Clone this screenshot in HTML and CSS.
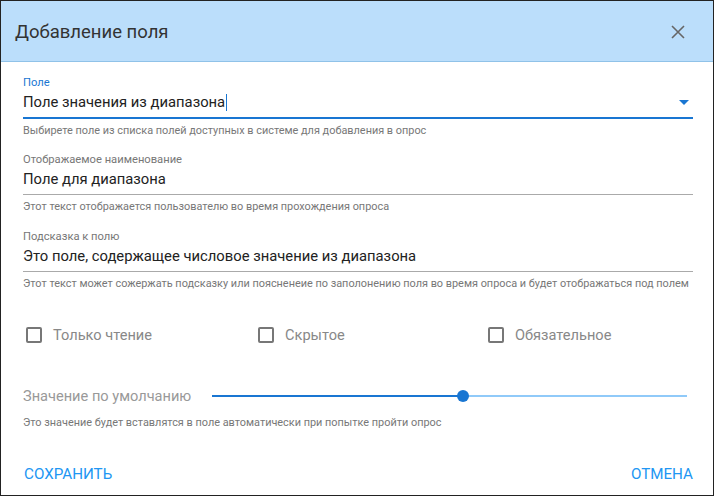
FILE: index.html
```html
<!DOCTYPE html>
<html lang="ru">
<head>
<meta charset="utf-8">
<link rel="stylesheet" href="styles.css">
</head>
<body>
<div class="dialog">
  <div class="header">
    <div class="title">Добавление поля</div>
    <svg class="close" width="14" height="14" viewBox="0 0 14 14"><path d="M1 1L13 13M13 1L1 13" stroke="#666" stroke-width="1.6" fill="none"/></svg>
  </div>
  <div class="content">
    <div class="field focused">
      <div class="label">Поле</div>
      <div class="input"><span class="value">Поле значения из диапазона</span><span class="caret"></span>
        <svg class="arrow" width="10" height="5" viewBox="0 0 10 5"><path d="M0 0H10L5 5Z" fill="#1976d2"/></svg>
      </div>
      <div class="helper">Выбирете поле из списка полей доступных в системе для добавления в опрос</div>
    </div>
    <div class="field">
      <div class="label">Отображаемое наименование</div>
      <div class="input"><span class="value">Поле для диапазона</span></div>
      <div class="helper">Этот текст отображается пользователю во время прохождения опроса</div>
    </div>
    <div class="field">
      <div class="label">Подсказка к полю</div>
      <div class="input"><span class="value">Это поле, содержащее числовое значение из диапазона</span></div>
      <div class="helper">Этот текст может сожержать подсказку или поясненеие по заполонению поля во время опроса и будет отображаться под полем</div>
    </div>
    <div class="checks">
      <label class="check"><span class="box"></span>Только чтение</label>
      <label class="check"><span class="box"></span>Скрытое</label>
      <label class="check"><span class="box"></span>Обязательное</label>
    </div>
    <div class="slider-row">
      <div class="slider-label">Значение по умолчанию</div>
      <div class="slider">
        <div class="track-fill" style="width:52.8%"></div>
        <div class="thumb"></div>
        <div class="track-rest"></div>
      </div>
    </div>
    <div class="helper slider-helper">Это значение будет вставлятся в поле автоматически при попытке пройти опрос</div>
  </div>
  <div class="actions">
    <span class="btn">Сохранить</span>
    <span class="btn">Отмена</span>
  </div>
</div>
</body>
</html>
```
FILE: styles.css
```css
html, body { margin: 0; padding: 0; background: #fff; }
body { font-family: Roboto, "Liberation Sans", Arial, sans-serif; }
.dialog {
  width: 712px;
  height: 494px;
  border: 1px solid #222;
  display: flex;
  flex-direction: column;
  background: #fff;
}
.header {
  height: 60px;
  background: #bbdefb;
  border-bottom: 1px solid #90c2e8;
  display: flex;
  align-items: center;
  justify-content: space-between;
  padding: 0 28px 0 14px;
  flex-shrink: 0;
}
.title { font-size: 18.5px; color: #333; padding-top: 2px; }
.close { display: block; margin-top: 1px; }
.content { padding: 14px 20px 0 22px; }
.field { margin-bottom: 16.5px; }
.label { font-size: 11.2px; color: #777; line-height: 13px; }
.field.focused .label { color: #1976d2; }
.input {
  position: relative;
  display: flex;
  align-items: flex-start;
  box-sizing: border-box;
  height: 29px;
  padding-top: 3px;
  line-height: 20px;
  border-bottom: 1px solid #aaa;
  font-size: 14.8px;
  color: #222;
}
.field.focused .input { border-bottom: 2px solid #1976d2; height: 29.5px; }
.caret { display: inline-block; width: 1px; height: 17px; background: #1976d2; margin: 2px 0 0 1px; }
.arrow { position: absolute; right: 4px; top: 11px; }
.helper { font-size: 10.9px; color: #777; margin-top: 6px; line-height: 12px; white-space: nowrap; }
.checks { display: flex; margin-top: 37px; padding-left: 3px; height: 16px; }
.check { display: flex; align-items: center; font-size: 14.6px; color: #888; }
.check:nth-child(1) { width: 232px; }
.check:nth-child(2) { width: 230px; }
.box {
  width: 12px; height: 12px;
  border: 2px solid #777;
  border-radius: 2px;
  margin-right: 11px;
}
.slider-row { display: flex; align-items: center; margin-top: 45px; height: 16px; }
.slider-label { font-size: 14.6px; color: #999; width: 189px; }
.slider { flex: 1; display: flex; align-items: center; margin-right: 6px; }
.track-fill { height: 2px; background: #1976d2; }
.thumb { width: 12px; height: 12px; border-radius: 50%; background: #1976d2; margin: 0 -6px; position: relative; }
.track-rest { flex: 1; height: 2px; background: #90caf9; }
.slider-helper { margin-top: 13px; }
.actions {
  margin-top: auto;
  display: flex;
  justify-content: space-between;
  padding: 0 20px 12px 23px;
}
.btn { font-size: 15.2px; color: #2196f3; text-transform: uppercase; }
```
